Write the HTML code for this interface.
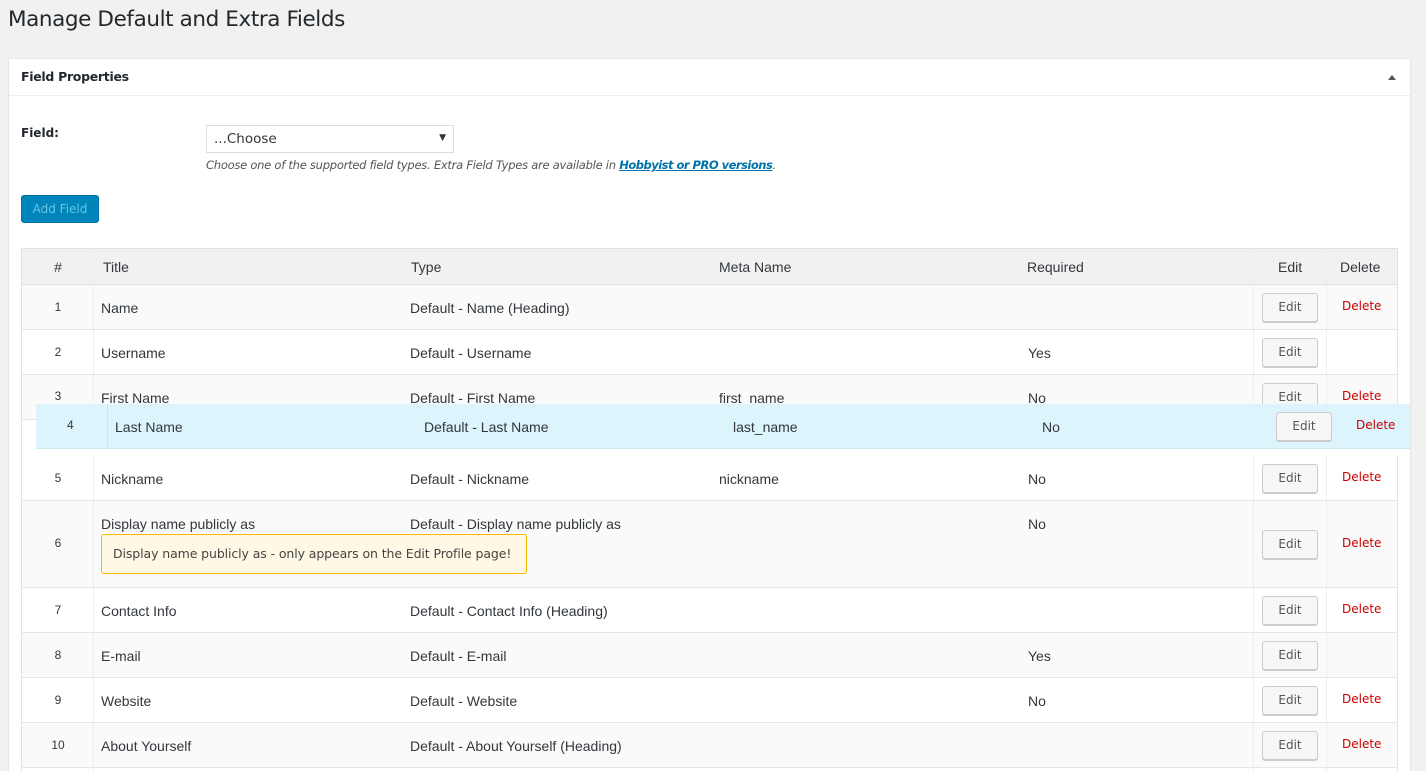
<!DOCTYPE html>
<html style="width:1426px;height:771px;overflow:hidden"><head><style>
*{box-sizing:border-box;margin:0;padding:0}
body{width:1426px;height:771px;overflow:hidden;background:#f1f1f1;font-family:"Liberation Sans",sans-serif;color:#32373c;position:relative}
.a{position:absolute}
h1{position:absolute;left:8px;top:7px;font-size:21.5px;font-weight:400;color:#23282d;font-family:"DejaVu Sans","Liberation Sans",sans-serif;letter-spacing:-0.4px}
.panel{position:absolute;left:8px;top:58px;width:1403px;height:720px;background:#fff;border:1px solid #e5e5e5}
.ph{position:absolute;left:0;top:0;width:100%;height:37px;border-bottom:1px solid #eee}
.row{position:absolute;left:21px;width:1377px;height:45px;border-bottom:1px solid #e6e6e6;border-left:1px solid #e1e1e1;border-right:1px solid #e1e1e1;font-size:14px}
.row span{position:absolute;top:15px}
.n{font-size:12px;width:72px;text-align:center;left:0}
.v1{position:absolute;left:71px;top:0;bottom:0;border-left:1px solid #eee}
.v2{position:absolute;left:1231px;top:0;bottom:0;border-left:1px solid #eee}
.v3{position:absolute;left:1304px;top:0;bottom:0;border-left:1px solid #eee}
.eb{position:absolute;left:1240px;top:8px;width:56px;height:29px;border:1px solid #ccc;border-radius:3px;background:#f7f7f7;font-size:12px;color:#555;text-align:center;line-height:27px;box-shadow:0 1px 0 #ccc;font-family:"DejaVu Sans",sans-serif}
.del{position:absolute;left:1320px;top:14px;font-size:12px;color:#c00;font-family:"DejaVu Sans",sans-serif}
</style></head><body>
<h1>Manage Default and Extra Fields</h1>
<div class="panel"><div class="ph"><div class="a" style="left:12px;top:10px;font-size:12.5px;font-weight:700;color:#23282d;font-family:'DejaVu Sans',sans-serif;letter-spacing:-0.3px">Field Properties</div>
<div class="a" style="right:14px;top:16px;width:0;height:0;border-left:4px solid transparent;border-right:4px solid transparent;border-bottom:5px solid #555"></div></div></div>
<div class="a" style="left:21px;top:126px;font-size:12px;font-weight:700;color:#23282d;font-family:'DejaVu Sans',sans-serif">Field:</div>
<div class="a" style="left:206px;top:125px;width:248px;height:28px;border:1px solid #ddd;background:#fff;font-size:13.5px;padding:5px 7px;font-family:'DejaVu Sans',sans-serif;color:#32373c">...Choose<span style="position:absolute;right:7px;top:7px;font-size:9px">▼</span></div>
<div class="a" style="left:206px;top:158px;font-size:11.5px;font-style:italic;color:#555;font-family:'DejaVu Sans',sans-serif;letter-spacing:-0.25px">Choose one of the supported field types. Extra Field Types are available in <a style="color:#0073aa;font-weight:700;text-decoration:underline;letter-spacing:-0.5px">Hobbyist or PRO versions</a>.</div>
<div class="a" style="left:21px;top:195px;width:78px;height:28px;background:#0085ba;border:1px solid #0073aa;border-radius:3px;color:#66c6e4;font-size:12px;text-align:center;line-height:26px;font-family:'DejaVu Sans',sans-serif">Add Field</div>

<div class="row" style="top:248px;height:37px;background:#f1f1f1;border-top:1px solid #e1e1e1;border-bottom:1px solid #e1e1e1">
<span class="n" style="top:10px;font-size:14px">#</span><div class="v1"></div><span style="left:81px;top:10px">Title</span><span style="left:389px;top:10px">Type</span><span style="left:697px;top:10px">Meta Name</span><span style="left:1005px;top:10px">Required</span><div class="v2"></div><span style="left:1256px;top:10px">Edit</span><div class="v3"></div><span style="left:1318px;top:10px">Delete</span></div>

<div class="row" style="top:285px;background:#fafafa"><span class="n">1</span><div class="v1"></div><span style="left:79px">Name</span><span style="left:388px">Default - Name (Heading)</span><div class="v2"></div><div class="eb">Edit</div><div class="v3"></div><div class="del">Delete</div></div>
<div class="row" style="top:330px;background:#fff"><span class="n">2</span><div class="v1"></div><span style="left:79px">Username</span><span style="left:388px">Default - Username</span><span style="left:1006px">Yes</span><div class="v2"></div><div class="eb">Edit</div><div class="v3"></div></div>
<div class="row" style="top:375px;background:#fafafa"><span class="n" style="top:14px">3</span><div class="v1"></div><span style="left:79px">First Name</span><span style="left:388px">Default - First Name</span><span style="left:697px">first_name</span><span style="left:1006px">No</span><div class="v2"></div><div class="eb">Edit</div><div class="v3"></div><div class="del">Delete</div></div>
<div class="a" style="left:36px;top:404px;width:1374px;height:45px;background:#dcf4fc;border-bottom:1px solid #d0e8f0;font-size:14px">
<span class="a" style="left:31px;top:14px;font-size:12px">4</span><div class="a" style="left:71px;top:0;bottom:0;border-left:1px solid #cde5ee"></div>
<span class="a" style="left:79px;top:15px">Last Name</span><span class="a" style="left:388px;top:15px">Default - Last Name</span><span class="a" style="left:697px;top:15px">last_name</span><span class="a" style="left:1006px;top:15px">No</span>
<div class="eb">Edit</div><div class="del">Delete</div></div>
<div class="a" style="left:21px;top:420px;width:15px;height:36px;background:#fff;border-left:1px solid #e1e1e1"></div>
<div class="row" style="top:456px;background:#fff"><span class="n">5</span><div class="v1"></div><span style="left:79px">Nickname</span><span style="left:388px">Default - Nickname</span><span style="left:697px">nickname</span><span style="left:1006px">No</span><div class="v2"></div><div class="eb">Edit</div><div class="v3"></div><div class="del">Delete</div></div>
<div class="row" style="top:501px;height:87px;background:#fafafa"><span class="n" style="top:35px">6</span><div class="v1"></div><span style="left:79px">Display name publicly as</span><span style="left:388px">Default - Display name publicly as</span><span style="left:1006px">No</span><div class="v2"></div><div class="eb" style="top:29px">Edit</div><div class="v3"></div><div class="del" style="top:35px">Delete</div>
<div class="a" style="left:79px;top:33px;width:426px;height:40px;background:#fff8e5;border:1px solid #ffb900;border-radius:3px;font-size:12.5px;padding:11px 11px;font-family:'DejaVu Sans',sans-serif;color:#444;letter-spacing:-0.1px">Display name publicly as - only appears on the Edit Profile page!</div></div>
<div class="row" style="top:588px;background:#fff"><span class="n">7</span><div class="v1"></div><span style="left:79px">Contact Info</span><span style="left:388px">Default - Contact Info (Heading)</span><div class="v2"></div><div class="eb">Edit</div><div class="v3"></div><div class="del">Delete</div></div>
<div class="row" style="top:633px;background:#fafafa"><span class="n">8</span><div class="v1"></div><span style="left:79px">E-mail</span><span style="left:388px">Default - E-mail</span><span style="left:1006px">Yes</span><div class="v2"></div><div class="eb">Edit</div><div class="v3"></div></div>
<div class="row" style="top:678px;background:#fff"><span class="n">9</span><div class="v1"></div><span style="left:79px">Website</span><span style="left:388px">Default - Website</span><span style="left:1006px">No</span><div class="v2"></div><div class="eb">Edit</div><div class="v3"></div><div class="del">Delete</div></div>
<div class="row" style="top:723px;background:#fafafa"><span class="n">10</span><div class="v1"></div><span style="left:79px">About Yourself</span><span style="left:388px">Default - About Yourself (Heading)</span><div class="v2"></div><div class="eb">Edit</div><div class="v3"></div><div class="del">Delete</div></div>
<div class="row" style="top:768px;height:3px;background:#fff;border-bottom:none"><div class="v1"></div><div class="v2"></div><div class="v3"></div></div>
</body></html>
